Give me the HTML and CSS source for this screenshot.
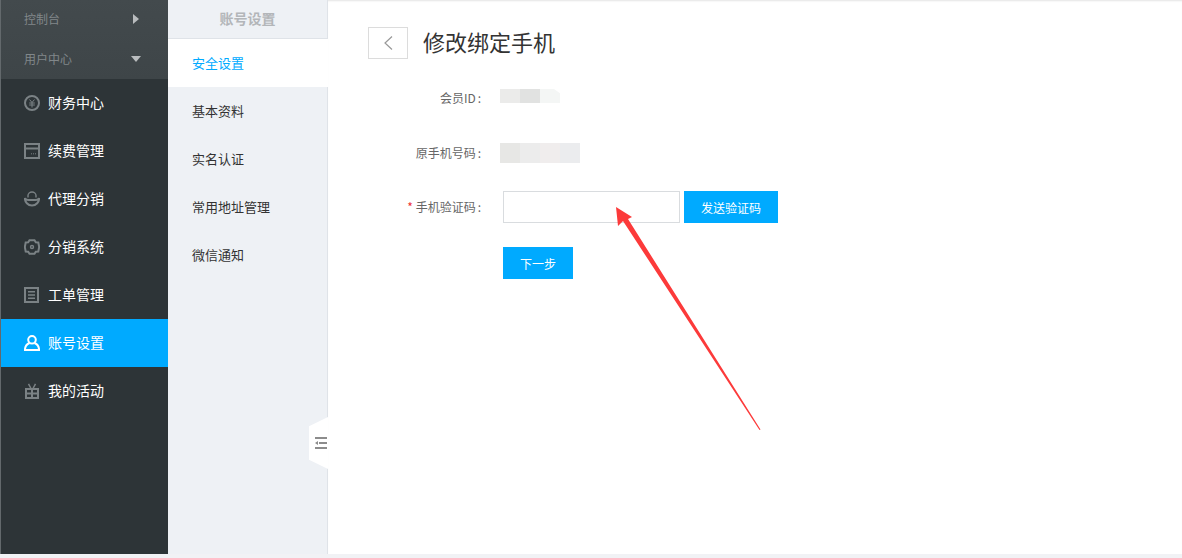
FILE: index.html
```html
<!DOCTYPE html>
<html>
<head>
	<meta charset="UTF-8">
	<title>修改绑定手机</title>
	<link rel="stylesheet" href="styles.css">
</head>
<body>
	<div class="app">
		<div class="sidebar">
			<div class="top-group">
				<div class="top-item"><span class="top-text">控制台</span><span class="tri-right"></span></div>
				<div class="top-item"><span class="top-text">用户中心</span><span class="tri-down"></span></div>
			</div>
			<div class="menu-item">
				<svg class="icon" viewBox="0 0 16 16"><circle cx="8" cy="8" r="7"/><path d="M5.500 4.500 8 7.500l2.500-3M5.200 8h5.600M5.200 10h5.600M8 7.500V12.500" stroke-width="1"/></svg>
				<span class="menu-text">财务中心</span>
			</div>
			<div class="menu-item">
				<svg class="icon" viewBox="0 0 16 16"><rect x="1" y="1" width="14" height="14"/><path d="M1 5.500h14"/><path d="M7 10.800h1M9 10.800h1M11 10.800h1" stroke-width="1"/></svg>
				<span class="menu-text">续费管理</span>
			</div>
			<div class="menu-item">
				<svg class="icon" viewBox="0 0 16 16"><path class="thin" d="M4 6.500V4.500C4 2.300 6 1 8 1s4 1.300 4 3.500V6.500"/><path d="M1 7c.5 1.500 2 2 3.500 2h7c1.500 0 3-.5 3.500-2 .5 4-3 7.500-7 7.500S.5 11 1 7z"/></svg>
				<span class="menu-text">代理分销</span>
			</div>
			<div class="menu-item">
				<svg class="icon" viewBox="0 0 16 16"><path d="M5.500 1.200h5l1.300 2 2.500.3L15.200 8l-.9 4.500-2.500.3-1.300 2h-5l-1.300-2-2.500-.3L.8 8l.9-4.500 2.500-.3z"/><circle class="thin" cx="8" cy="8" r="1.500"/></svg>
				<span class="menu-text">分销系统</span>
			</div>
			<div class="menu-item">
				<svg class="icon" viewBox="0 0 16 16"><rect x="1" y="1" width="13" height="14"/><path d="M4 4.800h7M4 8h7M4 11.200h7" stroke-width="1.500"/></svg>
				<span class="menu-text">工单管理</span>
			</div>
			<div class="menu-item active">
				<svg class="icon" viewBox="0 0 16 16"><circle cx="8" cy="4.800" r="3.800"/><path d="M5.500 8C3 9 1 11.500.9 15h14.200C15 11.500 13 9 10.500 8"/></svg>
				<span class="menu-text">账号设置</span>
			</div>
			<div class="menu-item">
				<svg class="icon" viewBox="0 0 16 16"><rect x="2" y="6" width="12" height="9"/><path d="M2 10.500h12M8 6V15"/><path d="M4.500 .8 7 5.500M11.500 .8 9 5.500" stroke-width="1.500"/></svg>
				<span class="menu-text">我的活动</span>
			</div>
		</div>

		<div class="subnav">
			<div class="subnav-title">账号设置</div>
			<div class="subnav-item active">安全设置</div>
			<div class="subnav-item">基本资料</div>
			<div class="subnav-item">实名认证</div>
			<div class="subnav-item">常用地址管理</div>
			<div class="subnav-item">微信通知</div>
			<div class="collapse">
				<svg viewBox="0 0 12 12" width="12" height="12"><path d="M0 0h12v2H0zM0 10h12v2H0zM4 5h8v2H4zM3 4v4L0 6z"/></svg>
			</div>
		</div>

		<div class="main">
			<div class="page-head">
				<div class="back">
					<svg viewBox="0 0 10 16" width="10" height="16"><path d="M9 1.500 2 8l7 6.500"/></svg>
				</div>
				<h1 class="page-title">修改绑定手机</h1>
			</div>

			<div class="form-row row-id">
				<div class="form-label">会员ID<span class="colon">:</span></div>
				<div class="mosaic mosaic-id">
					<span class="m1"></span><span class="m2"></span><span class="m3"></span>
				</div>
			</div>
			<div class="form-row row-phone">
				<div class="form-label">原手机号码<span class="colon">:</span></div>
				<div class="mosaic mosaic-phone">
					<span class="m4"></span><span class="m5"></span><span class="m6"></span><span class="m7"></span>
				</div>
			</div>
			<div class="form-row row-code">
				<div class="form-label"><span class="req">*</span> 手机验证码<span class="colon">:</span></div>
				<input class="input-field" type="text">
				<button class="button send" type="button">发送验证码</button>
			</div>
			<div class="form-actions">
				<button class="button next" type="button">下一步</button>
			</div>

			<svg class="arrow" viewBox="0 0 150 226" width="150" height="226"><path d="M0 0 2 19 7 14 143.500 223 144.500 222.500 12 12 16 10z"/></svg>
		</div>
	</div>
</body>
</html>
```

FILE: styles.css
```css
* {
	box-sizing: border-box;
}
html, body {
	margin: 0;
	height: 100%;
	overflow: hidden;
}
body {
	background-color: #f1f2f5;
	font-family: "Noto Sans CJK SC", "Liberation Sans", sans-serif;
	font-size: 12px;
	color: #333;
}
.app {
	display: flex;
	height: 554px;
}

/* left dark menu */
.sidebar {
	width: 168px;
	flex-shrink: 0;
	background-color: #2d3437;
	border-left: 1px solid #63696c;
}
.top-group {
	height: 79px;
	background: linear-gradient(#434a4d, #3e4548);
}
.top-item {
	display: flex;
	align-items: center;
	justify-content: space-between;
	height: 40px;
	padding: 0 27px 2px 23px;
	color: #81878a;
}
.top-text {
	margin-bottom: 2px;
}
.tri-right {
	border-left: 6px solid #b9bcbe;
	border-top: 5px solid transparent;
	border-bottom: 5px solid transparent;
	margin-right: 2px;
}
.tri-down {
	border-top: 6px solid #b9bcbe;
	border-left: 5px solid transparent;
	border-right: 5px solid transparent;
}
.menu-item {
	display: flex;
	align-items: center;
	gap: 8px;
	height: 48px;
	padding-left: 23px;
	font-size: 14px;
	color: #fff;
}
.menu-text {
	margin-bottom: 2px;
}
.menu-item.active {
	background-color: #00aaff;
}
.icon {
	width: 16px;
	height: 16px;
	fill: none;
	stroke: #7b8285;
	stroke-width: 2;
}
.icon .thin {
	stroke-width: 1.400;
}
.active .icon {
	stroke: #fff;
}

/* second column */
.subnav {
	position: relative;
	width: 160px;
	flex-shrink: 0;
	background-color: #eef1f5;
	border-right: 1px solid #dfe3e8;
}
.subnav-title {
	height: 39px;
	line-height: 36px;
	text-align: center;
	font-size: 14px;
	font-weight: bold;
	color: #b3b6b9;
	border-bottom: 1px solid #dfe3e8;
}
.subnav-item {
	height: 48px;
	line-height: 48px;
	padding-left: 24px;
	margin-right: -1px;
	font-size: 13px;
	color: #333;
}
.subnav-item.active {
	background-color: #fff;
	color: #00aaff;
}
.collapse {
	position: absolute;
	right: -1px;
	top: 417px;
	width: 19px;
	height: 52px;
	display: flex;
	align-items: center;
	justify-content: flex-end;
	background-color: #fff;
	clip-path: polygon(100% 0, 100% 100%, 0 82%, 0 18%);
}
.collapse svg {
	fill: #8c8c8c;
	margin-right: 1px;
}

/* main area */
.main {
	position: relative;
	flex: 1;
	background-color: #fff;
	padding: 27px 0 0 40px;
	box-shadow: inset 0 2px 2px -1px #e4e4e4;
}
.page-head {
	display: flex;
	align-items: center;
	gap: 15px;
	height: 32px;
}
.back {
	width: 40px;
	height: 32px;
	display: flex;
	align-items: center;
	justify-content: center;
	border: 1px solid #dcdcdc;
}
.back svg {
	fill: none;
	stroke: #999;
	stroke-width: 1.200;
}
.page-title {
	margin: 0 0 4px;
	font-size: 22px;
	font-weight: normal;
	line-height: 32px;
	color: #333;
}
.form-row {
	display: flex;
	align-items: center;
}
.form-label {
	width: 113px;
	padding-bottom: 2px;
	text-align: right;
	color: #666;
	white-space: nowrap;
}
.row-id .form-label {
	padding-bottom: 0;
}
.colon {
	margin-left: 2px;
}
.req {
	color: #e33;
}
.row-id {
	height: 20px;
	margin-top: 28px;
}
.row-phone {
	height: 20px;
	margin-top: 36px;
}
.row-code {
	height: 32px;
	margin-top: 28px;
}
.mosaic {
	display: flex;
	margin-left: 19px;
}
.mosaic span {
	width: 20px;
}
.mosaic-id {
	margin-bottom: 2px;
}
.mosaic-id span {
	height: 14px;
}
.mosaic-phone span {
	height: 20px;
}
.m1 { background-color: #ebebea; }
.m2 { background-color: #e1e2e1; }
.m3 {
	background-color: #f4f6f5;
	clip-path: polygon(0 0, 70% 0, 100% 30%, 100% 100%, 0 100%);
}
.m4 { background-color: #e7e7e5; }
.m5 { background-color: #ececec; }
.m6 { background-color: #f0eded; }
.m7 { background-color: #ebecee; }
.input-field {
	width: 177px;
	height: 32px;
	margin-left: 22px;
	margin-right: 4px;
	border: 1px solid #d9dcdf;
	background-color: #fff;
	padding: 0 8px;
}
.button {
	height: 32px;
	border: none;
	background-color: #00aaff;
	color: #fff;
	font-family: inherit;
	font-size: 12px;
	padding: 0;
}
.send {
	width: 94px;
}
.next {
	width: 70px;
}
.form-actions {
	margin-top: 24px;
	padding-left: 135px;
}

/* red annotation drawn on top of the screenshot */
.arrow {
	position: absolute;
	left: 288px;
	top: 207px;
	fill: #fc3a3a;
}
```
